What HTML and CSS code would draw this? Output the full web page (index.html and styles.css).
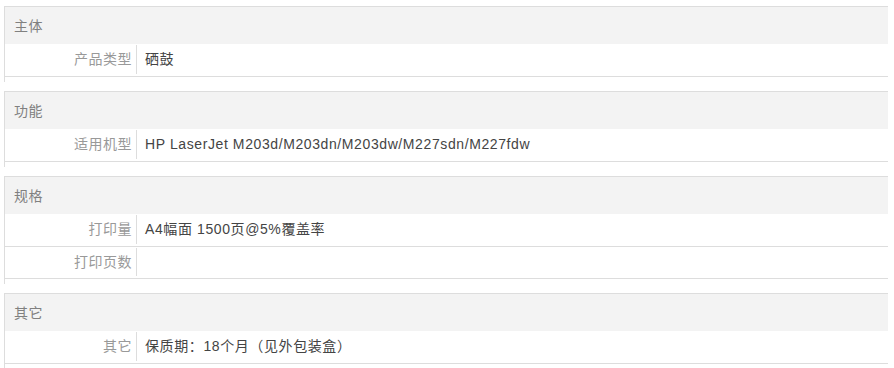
FILE: index.html
```html
<!DOCTYPE html>
<html lang="zh-CN">
<head>
<meta charset="utf-8">
<title>规格参数</title>
<link rel="stylesheet" href="styles.css">
</head>
<body>
<div class="params">
  <section class="group">
    <h3 class="group-title">主体</h3>
    <div class="row"><div class="label">产品类型</div><div class="value">硒鼓</div></div>
  </section>
  <section class="group">
    <h3 class="group-title">功能</h3>
    <div class="row"><div class="label">适用机型</div><div class="value">HP LaserJet M203d/M203dn/M203dw/M227sdn/M227fdw</div></div>
  </section>
  <section class="group">
    <h3 class="group-title">规格</h3>
    <div class="row"><div class="label">打印量</div><div class="value">A4幅面 1500页@5%覆盖率</div></div>
    <div class="row"><div class="label">打印页数</div><div class="value"></div></div>
  </section>
  <section class="group">
    <h3 class="group-title">其它</h3>
    <div class="row"><div class="label">其它</div><div class="value">保质期：18个月（见外包装盒）</div></div>
  </section>
</div>
</body>
</html>
```
FILE: styles.css
```css
html, body {
  margin: 0;
  padding: 0;
  background: #fff;
}

body {
  font-family: "Liberation Sans", "Noto Sans CJK SC", sans-serif;
  font-size: 14px;
  letter-spacing: 0.5px;
  color: #666;
}

.params {
  padding: 6px 6px 0 4px;
}

.group {
  border-top: 1px solid #ddd;
  border-left: 1px solid #ddd;
  padding-bottom: 5px;
  margin-bottom: 9px;
}

.group-title {
  margin: 0;
  height: 37px;
  line-height: 39px;
  padding-left: 9px;
  background: #f3f3f3;
  font-size: 14px;
  font-weight: normal;
  color: #808080;
}

.row {
  display: flex;
  height: 32px;
  border-bottom: 1px solid #ddd;
}

/* the next row sits one pixel tighter */
.row + .row {
  height: 31px;
}

.label {
  box-sizing: border-box;
  width: 132px;
  flex: none;
  margin: 1px 0 2px;
  padding-right: 4px;
  border-right: 1px solid #ddd;
  text-align: right;
  line-height: 29px;
  color: #999;
}

.value {
  flex: 1;
  padding-left: 8px;
  line-height: 31px;
  letter-spacing: 0.6px;
  color: #444;
}
```
